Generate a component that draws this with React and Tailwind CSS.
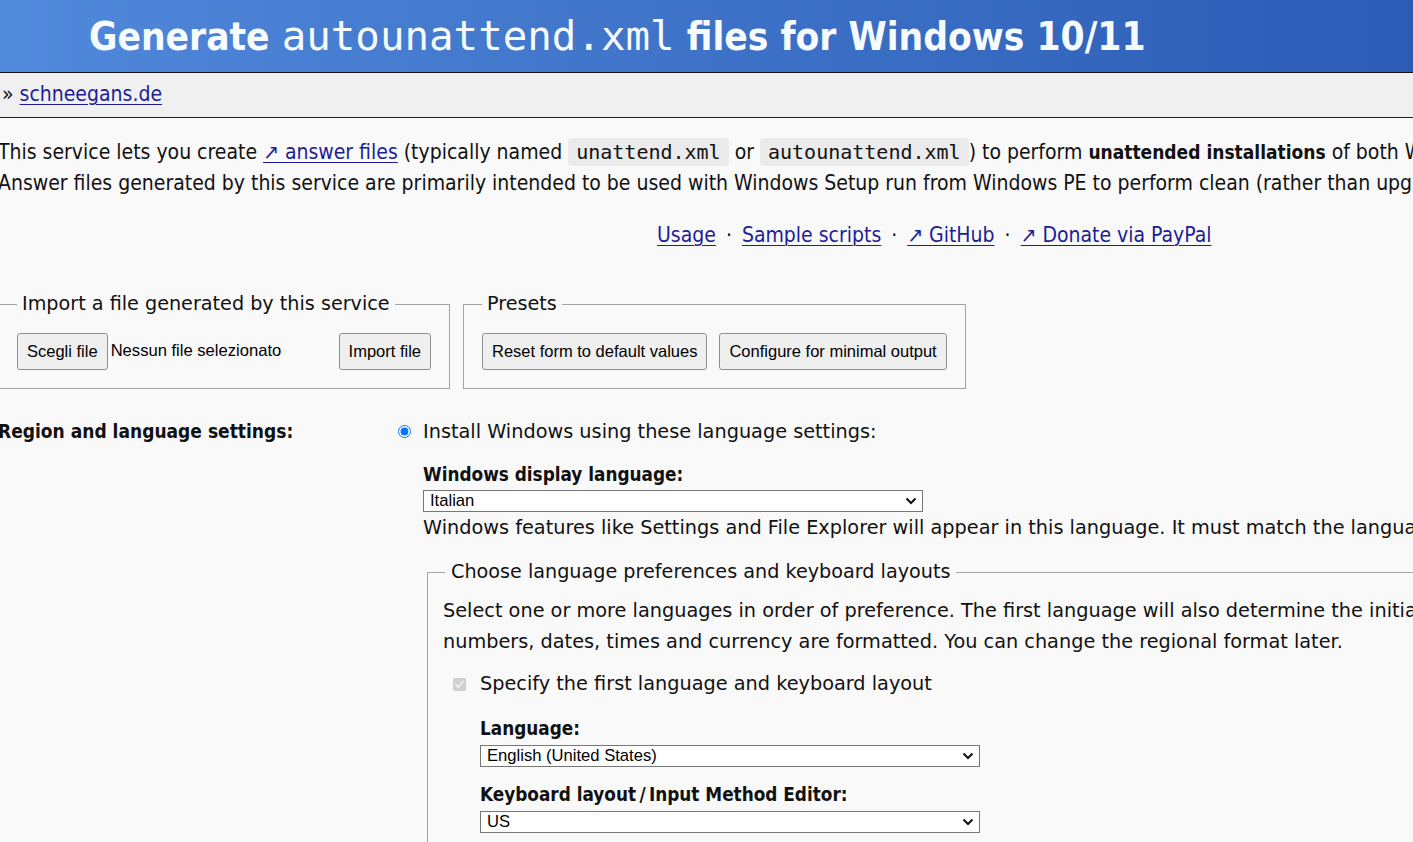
import React from "react";

const COND = { fontFamily: '"DejaVu Sans Condensed", "DejaVu Sans", sans-serif' };
const SANS = { fontFamily: '"DejaVu Sans", Verdana, sans-serif' };
const MONO = { fontFamily: '"DejaVu Sans Mono", "Liberation Mono", monospace' };
const ARIAL = { fontFamily: '"Liberation Sans", Arial, sans-serif' };

function Chevron() {
  return (
    <svg width="12" height="8" viewBox="0 0 12 8" className="shrink-0">
      <path d="M1.5 1.5 L6 6 L10.5 1.5" fill="none" stroke="#111" strokeWidth="2" />
    </svg>
  );
}

function FakeSelect({ value }) {
  return (
    <div
      className="w-[500px] h-[22px] border border-[#767676] bg-white flex items-center justify-between pl-[6px] pr-[5px] text-[16.6px] text-black leading-none"
      style={ARIAL}
    >
      <span>{value}</span>
      <Chevron />
    </div>
  );
}

function Btn({ children }) {
  return (
    <button
      className="h-[37px] px-[9px] border border-[#8f8f8f] rounded-[3px] bg-[#efefef] text-[16.5px] text-black whitespace-nowrap"
      style={ARIAL}
    >
      {children}
    </button>
  );
}

function Link({ children }) {
  return <a className="text-[#1d1d97] underline underline-offset-[3px] decoration-1">{children}</a>;
}

function Sep() {
  return <span className="mx-[10px]">·</span>;
}

function Code({ children }) {
  return (
    <code className="bg-[#ebebeb] rounded-[4px] px-[8px] py-[2px] text-[20px] text-[#111]" style={MONO}>
      {children}
    </code>
  );
}

export default function App() {
  return (
    <div className="w-[1413px] h-[842px] overflow-hidden bg-[#f9f9f9] text-[#111]">
      <header className="h-[73px] border-b border-[#141414] bg-linear-to-r from-[#5189db] to-[#2c5cb5] flex items-center pl-[89px]">
        <h1 className="text-[38.5px] font-bold text-[#f5fbff] whitespace-nowrap leading-none" style={COND}>
          Generate{" "}
          <span className="font-normal text-[40.8px]" style={MONO}>
            autounattend.xml
          </span>{" "}
          files for Windows 10/11
        </h1>
      </header>
      <nav className="h-[45px] bg-[#f0f0f0] border-b border-[#222] flex items-center pl-[2px] text-[21px]" style={COND}>
        <span>»&nbsp;</span>
        <Link>schneegans.de</Link>
      </nav>

      <main className="ml-[-2px] w-[1600px]">
        <div className="mt-[19px] text-[21px] leading-[31px] whitespace-nowrap" style={COND}>
          <p>
            This service lets you create <Link>↗ answer files</Link> (typically named <Code>unattend.xml</Code> or{" "}
            <Code>autounattend.xml</Code>) to perform <b className="text-[19px]">unattended installations</b> of both
            Windows 10 and Windows 11.
          </p>
          <p>
            Answer files generated by this service are primarily intended to be used with Windows Setup run from Windows
            PE to perform clean (rather than upgrade) installations.
          </p>
          <p className="mt-[21px] pl-[659px]">
            <Link>Usage</Link>
            <Sep />
            <Link>Sample scripts</Link>
            <Sep />
            <Link>↗ GitHub</Link>
            <Sep />
            <Link>↗ Donate via PayPal</Link>
          </p>
        </div>

        <div className="flex gap-[13px] mt-[42px]" style={SANS}>
          <fieldset className="w-[452px] border border-[#a3a3a3] pl-[18px] pr-[18px] pt-[18px] pb-[18px]">
            <legend className="px-[5px] text-[19.2px] leading-[22px]">Import a file generated by this service</legend>
            <div className="flex items-center justify-between">
              <div className="flex items-center">
                <Btn>Scegli file</Btn>
                <span className="ml-[3px] text-[16.6px] text-black" style={ARIAL}>
                  Nessun file selezionato
                </span>
              </div>
              <Btn>Import file</Btn>
            </div>
          </fieldset>
          <fieldset className="w-[503px] border border-[#a3a3a3] pl-[18px] pr-[17px] pt-[18px] pb-[18px]">
            <legend className="px-[5px] text-[19.2px] leading-[22px]">Presets</legend>
            <div className="flex items-center gap-[12px]">
              <Btn>Reset form to default values</Btn>
              <Btn>Configure for minimal output</Btn>
            </div>
          </fieldset>
        </div>

        <div className="flex mt-[31px] text-[19.3px] leading-[24px]" style={SANS}>
          <div className="w-[400px] shrink-0 font-bold text-[19px] mt-[-1px]" style={COND}>
            Region and language settings:
          </div>
          <div className="flex flex-col whitespace-nowrap">
            <label className="flex items-center">
              <input type="radio" defaultChecked className="w-[13px] h-[13px] mr-[12px] mt-[-2px]" />
              <span>Install Windows using these language settings:</span>
            </label>
            <div className="pl-[25px]">
              <div className="mt-[19px] font-bold text-[18.8px]" style={COND}>
                Windows display language:
              </div>
              <div className="mt-[3px]">
                <FakeSelect value="Italian" />
              </div>
              <div className="mt-[4px]">
                Windows features like Settings and File Explorer will appear in this language. It must match the
                language of the installation media.
              </div>

              <fieldset className="ml-[4px] mt-[21px] w-[1100px] border border-[#a3a3a3] pl-[15px] pt-[12px] pb-[20px]">
                <legend className="ml-[2px] px-[6px] text-[19.2px] leading-[22px]">
                  Choose language preferences and keyboard layouts
                </legend>
                <p className="leading-[31px]">
                  Select one or more languages in order of preference. The first language will also determine the
                  initial regional format, i.e. how
                  <br />
                  numbers, dates, times and currency are formatted. You can change the regional format later.
                </p>
                <label className="flex items-center mt-[15px]">
                  <input type="checkbox" defaultChecked disabled className="w-[13px] h-[13px] ml-[10px] mr-[14px]" />
                  <span>Specify the first language and keyboard layout</span>
                </label>
                <div className="pl-[37px]">
                  <div className="mt-[21px] font-bold text-[18.8px]" style={COND}>
                    Language:
                  </div>
                  <div className="mt-[4px]">
                    <FakeSelect value="English (United States)" />
                  </div>
                  <div className="mt-[16px] font-bold text-[18.8px]" style={COND}>
                    Keyboard layout{"\u2009"}/{"\u2009"}Input Method Editor:
                  </div>
                  <div className="mt-[4px]">
                    <FakeSelect value="US" />
                  </div>
                </div>
              </fieldset>
            </div>
          </div>
        </div>
      </main>
    </div>
  );
}
